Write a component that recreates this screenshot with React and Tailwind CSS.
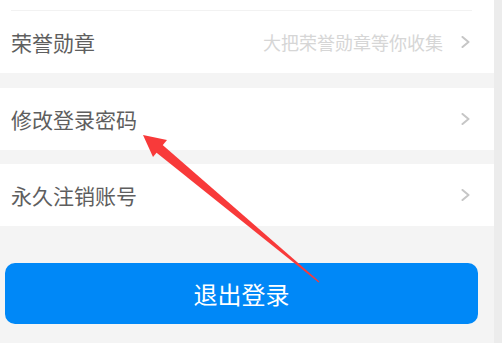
const font = { fontFamily: '"Noto Sans CJK SC", "Noto Sans", sans-serif' }

function Chevron() {
  return (
    <svg width="10" height="12" viewBox="0 0 10 12" fill="none">
      <path d="M1.5 1 L7.5 6 L1.5 11" stroke="#c6c6c6" strokeWidth="2" strokeLinecap="round" strokeLinejoin="round" />
    </svg>
  )
}

function Row({ label, hint }) {
  return (
    <div className="flex items-center h-[62px] bg-white pl-[11px] pr-[23px]">
      <span className="text-[21px] text-[#5e5e5e] leading-none">{label}</span>
      <span className="ml-auto text-[18px] text-[#d6d6d6] leading-none mr-[18px]">{hint}</span>
      <Chevron />
    </div>
  )
}

export default function App() {
  return (
    <div className="relative flex w-[502px] h-[343px] overflow-hidden bg-[#ececec]" style={font}>
      <div className="w-[494px] h-full bg-[#f4f4f4] flex flex-col">
        {/* top block: remnant of previous row + 荣誉勋章 */}
        <div className="bg-white pt-[10px]">
          <div className="mx-[11px] mr-[22px] border-t border-[#f2f2f2]" />
          <Row label="荣誉勋章" hint="大把荣誉勋章等你收集" />
        </div>
        <div className="h-[15px]" />
        <Row label="修改登录密码" />
        <div className="h-[14px]" />
        <Row label="永久注销账号" />
        <div className="h-[37px]" />
        <div className="mx-[5px] w-[473px] h-[61px] rounded-[10px] bg-[#0088f7] flex items-center justify-center">
          <span className="text-[24px] text-white leading-none">退出登录</span>
        </div>
      </div>

      {/* red annotation arrow */}
      <svg className="absolute left-0 top-0 pointer-events-none" width="502" height="343">
        <polygon points="143,135 167,140 153,157" fill="#f83a3a" />
        <polygon points="161.5,144 155,151.5 318.6,282.5 319.4,281.5" fill="#f83a3a" />
      </svg>
    </div>
  )
}
